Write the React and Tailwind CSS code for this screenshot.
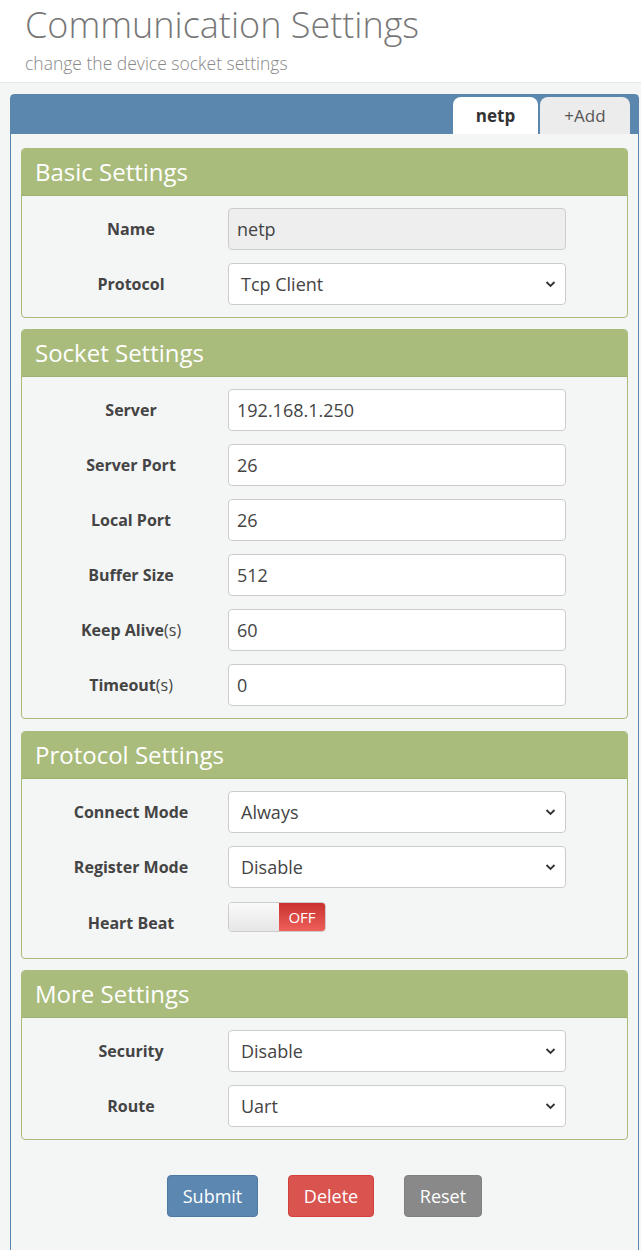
import React from "react";

const font = { fontFamily: '"Open Sans", "Noto Sans", sans-serif' };

function Chevron() {
  return (
    <svg
      className="pointer-events-none absolute right-[9px] top-1/2 -translate-y-1/2"
      width="11"
      height="8"
      viewBox="0 0 11 8"
    >
      <path d="M1.5 2 L5.5 6 L9.5 2" fill="none" stroke="#333" strokeWidth="1.8" />
    </svg>
  );
}

function Field({ value, disabled }) {
  return (
    <div
      className={`w-[338px] h-[42px] rounded-[4px] border border-[#ccc] px-[8px] flex items-center text-[18px] text-[#444] ${
        disabled ? "bg-[#eee]" : "bg-white"
      }`}
    >
      {value}
    </div>
  );
}

function Select({ value }) {
  return (
    <div className="relative w-[338px] h-[42px] rounded-[4px] border border-[#ccc] bg-white px-[12px] flex items-center text-[18px] text-[#444]">
      {value}
      <Chevron />
    </div>
  );
}

function Row({ label, unit, tall, children }) {
  return (
    <div className={`flex ${tall ? "h-[45px] items-start" : "h-[42px] items-center"}`}>
      <div
        className={`w-[206px] shrink-0 pl-[12px] text-center text-[16px] text-[#444] ${
          tall ? "pt-[10px]" : ""
        }`}
      >
        <span className="font-bold">{label}</span>
        {unit && <span className="font-normal">{unit}</span>}
      </div>
      {children}
    </div>
  );
}

function Section({ title, className = "", children }) {
  return (
    <div className={`rounded-[4px] border border-[#a9bc7c] bg-[#f4f5f5] overflow-hidden ${className}`}>
      <div className="h-[47px] bg-[#a9bc7c] border-b border-[#9cb070] flex items-center px-[13px] text-[24px] text-white">
        {title}
      </div>
      <div className="flex flex-col gap-[13px] py-[12px]">{children}</div>
    </div>
  );
}

function Toggle() {
  return (
    <div className="flex w-[98px] h-[30px] mt-[1px] rounded-[4px] border border-[#ccc] overflow-hidden">
      <div className="w-[50px] bg-gradient-to-b from-[#fafafa] to-[#e6e6e6]" />
      <div className="flex-1 bg-gradient-to-b from-[#c9302c] to-[#ee5f5b] flex items-center justify-center text-white text-[15px]">
        OFF
      </div>
    </div>
  );
}

export default function App() {
  return (
    <div className="min-h-[1250px] bg-[#f4f5f5]" style={font}>
      <header className="bg-white h-[83px] border-b border-[#e8e8e8] pl-[25px]">
        <h1 className="text-[36px] font-light text-[#777] leading-none pt-[7px]">
          Communication Settings
        </h1>
        <p className="text-[17.5px] font-light text-[#888] mt-[7px]">
          change the device socket settings
        </p>
      </header>

      <div className="pl-[10px] pr-[2px] pt-[11px]">
        <div className="border border-[#5b87af] rounded-t-[4px] min-h-[1160px] bg-[#f4f5f5]">
          <div className="h-[39px] bg-[#5b87af] flex justify-end items-end pr-[8px] gap-[2px]">
            <div className="w-[85px] h-[37px] bg-white rounded-t-[8px] flex items-center justify-center text-[17px] font-bold text-[#333]">
              netp
            </div>
            <div className="w-[90px] h-[37px] bg-[#ececec] rounded-t-[8px] flex items-center justify-center text-[17px] text-[#555]">
              +Add
            </div>
          </div>

          <div className="pl-[10px] pr-[10px] pt-[14px] flex flex-col gap-[11px]">
            <Section title="Basic Settings">
              <Row label="Name">
                <Field value="netp" disabled />
              </Row>
              <Row label="Protocol">
                <Select value="Tcp Client" />
              </Row>
            </Section>

            <Section title="Socket Settings">
              <Row label="Server">
                <Field value="192.168.1.250" />
              </Row>
              <Row label="Server Port">
                <Field value="26" />
              </Row>
              <Row label="Local Port">
                <Field value="26" />
              </Row>
              <Row label="Buffer Size">
                <Field value="512" />
              </Row>
              <Row label="Keep Alive" unit="(s)">
                <Field value="60" />
              </Row>
              <Row label="Timeout" unit="(s)">
                <Field value="0" />
              </Row>
            </Section>

            <Section title="Protocol Settings" className="mt-[1px]">
              <Row label="Connect Mode">
                <Select value="Always" />
              </Row>
              <Row label="Register Mode">
                <Select value="Disable" />
              </Row>
              <Row label="Heart Beat" tall>
                <Toggle />
              </Row>
            </Section>

            <Section title="More Settings">
              <Row label="Security">
                <Select value="Disable" />
              </Row>
              <Row label="Route">
                <Select value="Uart" />
              </Row>
            </Section>
          </div>

          <div className="flex justify-center gap-[30px] pt-[35px]">
            <button className="w-[91px] h-[42px] rounded-[4px] bg-[#5b87b0] border border-[#4e79a2] text-white text-[18px]">
              Submit
            </button>
            <button className="w-[86px] h-[42px] rounded-[4px] bg-[#d9534f] border border-[#d43f3a] text-white text-[18px]">
              Delete
            </button>
            <button className="w-[78px] h-[42px] rounded-[4px] bg-[#898989] border border-[#808080] text-white text-[18px]">
              Reset
            </button>
          </div>
        </div>
      </div>
    </div>
  );
}
